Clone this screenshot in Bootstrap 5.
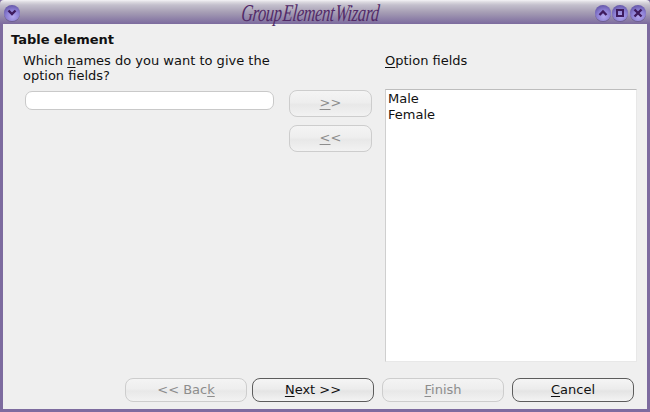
<!DOCTYPE html>
<html lang="en"><head><meta charset="utf-8"><title>Group Element Wizard</title>
<link href="https://cdn.jsdelivr.net/npm/bootstrap@5.3.0/dist/css/bootstrap.min.css" rel="stylesheet">
<style>
html,body{margin:0;width:650px;height:412px;overflow:hidden;background:#7d6b9f}
body{font-family:"DejaVu Sans",sans-serif;font-size:13px;line-height:15px;color:#111}
.win{width:650px;height:412px;display:flex;flex-direction:column}
.tbar{height:24px;flex:none;padding:2px 3px 0 4px;background:linear-gradient(#f4f3f6 0,#dcdae0 2px,#c3bfcc 5px,#a79fb5 12px,#7c6b9e 24px);display:flex;align-items:center;border-radius:4px 4px 0 0}
.ttlwrap{flex:1;display:flex;justify-content:center;padding-left:4px}
.ttl{display:inline-block;font-family:"Liberation Serif",serif;font-style:italic;font-size:24px;color:#522a68;letter-spacing:-.5px;word-spacing:-3.500px;line-height:24px;white-space:nowrap;transform:scaleX(.68) skewX(-8deg)}
.orb{width:16px;height:16px;border-radius:50%;flex:none;margin-right:1.500px;background:radial-gradient(circle at 55% 72%,#b3a7ee 0,#8c7fd4 45%,#5f50a2 85%,#4c3e85 100%);display:flex;align-items:center;justify-content:center;box-shadow:0 1px 0 #6d5e92}
.orb svg{display:block}
.bodyarea{flex:1;margin:0 3px 3px 3px;background:#efefef;padding:8px 10px 7px 8px;display:flex;flex-direction:column;min-height:0}
.hd{font-weight:700;height:15px;margin-bottom:6px}
.mainrow{flex:1;display:flex;min-height:0}
.leftc{width:266px;padding-left:12px;flex:none}
.leftc p{margin:0 0 8px;width:255px}
.fld{display:block;width:249px;height:19px;margin-left:2px;background:#fff;border:1px solid #c9c9c9;border-radius:7px;padding:0;outline:0}
.midc{width:83px;flex:none;margin-left:12px;padding-top:37px;display:flex;flex-direction:column;gap:8px}
.rightc{width:252px;flex:none;margin-left:13px;display:flex;flex-direction:column}
.lab{height:15px;margin-bottom:21px}
.listb{list-style:none;margin:0;padding:1px 2px;background:#fff;border:1px solid #cfcfcf;border-top-color:#bdbdbd;border-right-color:#e8e8e8;border-bottom-color:#e8e8e8;height:273px;flex:none;line-height:16px}
.wbtn{font-family:"DejaVu Sans",sans-serif;font-size:13px;line-height:15px;color:#111;background:linear-gradient(#f5f5f5 0,#ececec 45%,#e4e4e4 55%,#f3f3f3 100%);border:1px solid #5c5c5c;border-radius:8px;padding:0 0 2px;height:24px;text-align:center}
.wbtn:disabled{color:#8d8d8d;border-color:#cdcdcd;opacity:1;background:linear-gradient(#f4f4f4 0,#eeeeee 45%,#e8e8e8 55%,#f2f2f2 100%)}
.mid{width:83px;height:27px;flex:none}
.foot{display:flex;flex:none;padding-left:114px}
.foot .wbtn{width:122px}
.g1{margin-left:5px}.g2{margin-left:8px}
u{text-underline-offset:2px}
</style></head><body>
<div class="win">
 <div class="tbar">
  <span class="orb"><svg width="10" height="8" viewBox="0 0 10 8"><path d="M1.500 1.500 5 5l3.500-3.500" fill="none" stroke="#3e1b5e" stroke-width="2.400"/></svg></span>
  <span class="ttlwrap"><span class="ttl">Group Element Wizard</span></span>
  <span class="orb"><svg width="10" height="8" viewBox="0 0 10 8"><path d="M1.500 6 5 2.500 8.500 6" fill="none" stroke="#3e1b5e" stroke-width="2.400"/></svg></span>
  <span class="orb"><svg width="10" height="10" viewBox="0 0 10 10"><rect x="2" y="2" width="6" height="6" fill="none" stroke="#3e1b5e" stroke-width="2"/></svg></span>
  <span class="orb"><svg width="10" height="10" viewBox="0 0 10 10"><path d="M1.500 1.500l7 7M8.500 1.500l-7 7" fill="none" stroke="#3e1b5e" stroke-width="2.400"/></svg></span>
 </div>
 <div class="bodyarea">
  <div class="hd">Table element</div>
  <div class="mainrow">
   <div class="leftc">
    <p>Which <u>n</u>ames do you want to give the option fields?</p>
    <input class="fld" type="text" aria-label="names">
   </div>
   <div class="midc">
    <button class="wbtn mid" disabled><u>&gt;</u>&gt;</button>
    <button class="wbtn mid" disabled><u>&lt;</u>&lt;</button>
   </div>
   <div class="rightc">
    <div class="lab"><u>O</u>ption fields</div>
    <ul class="listb"><li>Male</li><li>Female</li></ul>
   </div>
  </div>
  <div class="foot">
   <button class="wbtn" disabled>&lt;&lt; Bac<u>k</u></button>
   <button class="wbtn g1"><u>N</u>ext &gt;&gt;</button>
   <button class="wbtn g2" disabled><u>F</u>inish</button>
   <button class="wbtn g2"><u>C</u>ancel</button>
  </div>
 </div>
</div>
<script src="https://cdn.jsdelivr.net/npm/bootstrap@5.3.0/dist/js/bootstrap.bundle.min.js"></script>
</body></html>
